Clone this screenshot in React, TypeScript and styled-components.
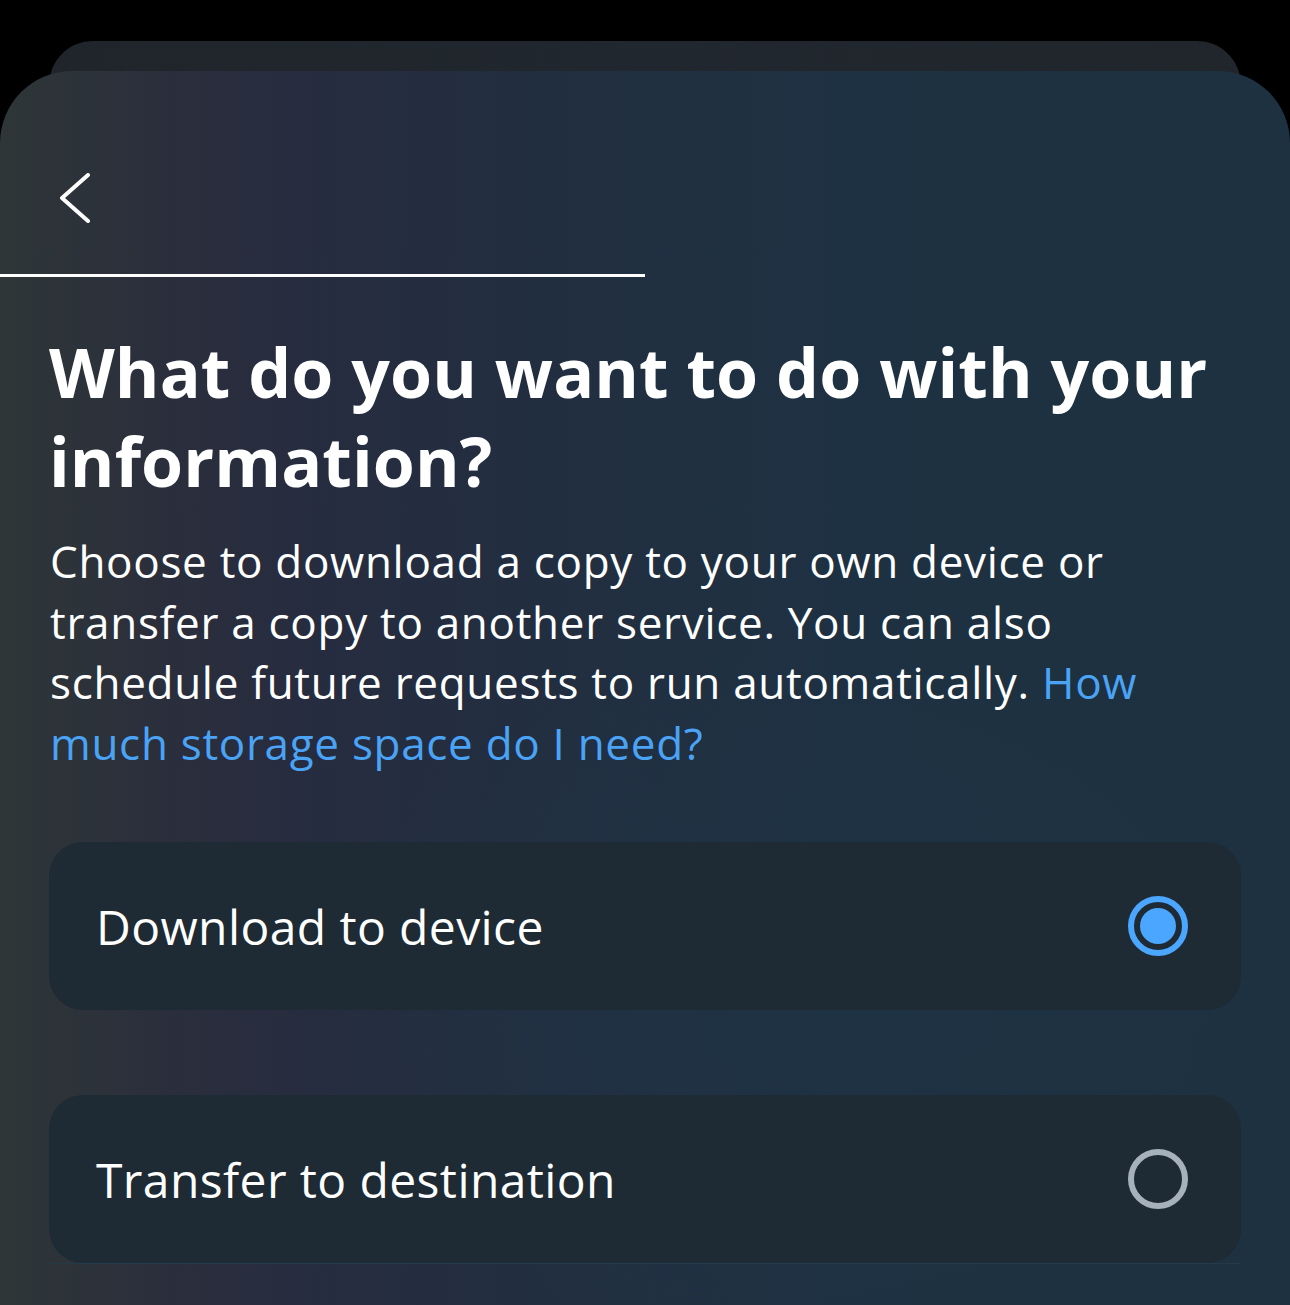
import React, { useState } from "react";
import styled, { createGlobalStyle } from "styled-components";

const Global = createGlobalStyle`
  html, body { margin: 0; padding: 0; background: #000; }
  body { width: 1290px; height: 1305px; overflow: hidden; font-family: "Open Sans", "Noto Sans", sans-serif; }
  * { box-sizing: border-box; }
`;

const Page = styled.div`
  width: 1290px;
  height: 1305px;
  padding-top: 41px;
  display: flex;
  flex-direction: column;
  background: #000;
`;

const BackSheet = styled.div`
  margin: 0 49px;
  height: 70px;
  border-radius: 44px 44px 0 0;
  background: linear-gradient(90deg, #1f252b 0%, #21272e 50%, #20262c 100%);
`;

const Sheet = styled.div`
  flex: 1;
  margin-top: -40px;
  border-radius: 72px 72px 0 0;
  background:
    radial-gradient(ellipse 700px 500px at 60% 75%, rgba(30, 52, 70, 0.5), rgba(30, 52, 70, 0) 70%),
    linear-gradient(90deg, #2e3637 0%, #2b2f3c 12%, #272c3f 22%, #222e40 40%, #1e3142 65%, #1d3140 100%);
  display: flex;
  flex-direction: column;
`;

const Header = styled.div`
  height: 203px;
  padding: 102px 0 0 57px;
`;

const BackButton = styled.button`
  width: 34px;
  height: 50px;
  padding: 0;
  border: 0;
  background: none;
  color: #fff;
  cursor: pointer;
  display: block;
`;

const Progress = styled.div`
  height: 3px;
  width: 645px;
  background: #fff;
`;

const Content = styled.div`
  padding: 0 49px;
  display: flex;
  flex-direction: column;
`;

const Title = styled.h1`
  margin: 50px 0 0;
  font-size: 68px;
  line-height: 89px;
  font-weight: 700;
  color: #fff;
  letter-spacing: 0.1px;
`;

const Body = styled.p`
  margin: 26px 0 0 1px;
  font-size: 44px;
  line-height: 60.5px;
  font-weight: 400;
  color: #fff;
  letter-spacing: 0.7px;
`;

const Link = styled.a`
  color: #4aa3f5;
  text-decoration: none;
`;

const Options = styled.div`
  margin-top: 69px;
  display: flex;
  flex-direction: column;
  gap: 85px;
`;

const Option = styled.label`
  height: 168px;
  border-radius: 34px;
  background: #1e2a34;
  padding: 0 53px 0 47px;
  display: flex;
  align-items: center;
  justify-content: space-between;
  cursor: pointer;
`;

const OptionLabel = styled.span`
  font-size: 48px;
  font-weight: 500;
  color: #fff;
  letter-spacing: 0.4px;
`;

const Radio = styled.span<{ $checked: boolean }>`
  width: 60px;
  height: 60px;
  border-radius: 50%;
  border: 6px solid ${(p) => (p.$checked ? "#4aa6ff" : "#a7b1bb")};
  display: flex;
  align-items: center;
  justify-content: center;
  &::after {
    content: "";
    width: 36px;
    height: 36px;
    border-radius: 50%;
    background: ${(p) => (p.$checked ? "#4aa6ff" : "transparent")};
  }
`;

const Divider = styled.div`
  margin-top: -85px;
  height: 1px;
  background: #243a48;
`;

const options = ["Download to device", "Transfer to destination"];

export default function App() {
  const [selected, setSelected] = useState(0);
  return (
    <Page>
      <Global />
      <BackSheet />
      <Sheet>
        <Header>
          <BackButton aria-label="Back">
            <svg width="34" height="50" viewBox="0 0 34 50" fill="none">
              <path d="M31 2 L5 25 L31 48" stroke="#fff" strokeWidth="4" strokeLinecap="round" strokeLinejoin="round" />
            </svg>
          </BackButton>
        </Header>
        <Progress />
        <Content>
          <Title>What do you want to do with your information?</Title>
          <Body>
            Choose to download a copy to your own device or transfer a copy to another service. You can also schedule future requests to run automatically.{" "}
            <Link href="#">How much storage space do I need?</Link>
          </Body>
          <Options>
            {options.map((o, i) => (
              <Option key={o} onClick={() => setSelected(i)}>
                <OptionLabel>{o}</OptionLabel>
                <Radio $checked={selected === i} />
              </Option>
            ))}
            <Divider />
          </Options>
        </Content>
      </Sheet>
    </Page>
  );
}
